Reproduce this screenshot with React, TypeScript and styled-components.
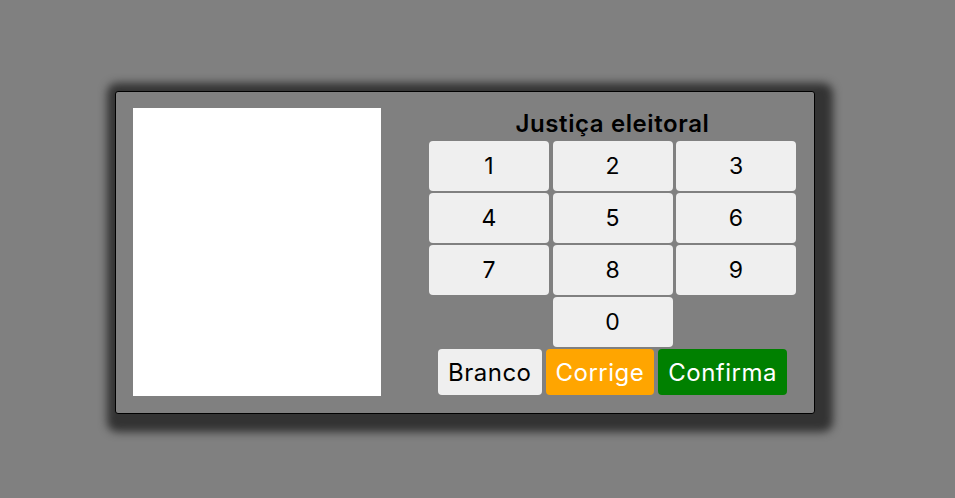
import React from "react";
import styled, { createGlobalStyle } from "styled-components";

const GlobalStyle = createGlobalStyle`
  html, body {
    margin: 0;
    padding: 0;
    background: #808080;
    font-family: "Inter", "Noto Sans", sans-serif;
  }
`;

const Page = styled.div`
  width: 955px;
  height: 498px;
  box-sizing: border-box;
  padding: 91px 0 0 115px;
`;

const Urna = styled.div`
  width: 700px;
  height: 323px;
  box-sizing: border-box;
  border: 1px solid #000;
  border-radius: 3px;
  background: #808080;
  box-shadow: 5px 5px 8px 13px #333;
  display: flex;
  padding: 16px 16px 16px 17px;
`;

const Tela = styled.div`
  width: 248px;
  height: 288px;
  background: #fff;
`;

const Lateral = styled.div`
  margin-left: 48px;
  width: 367px;
  display: flex;
  flex-direction: column;
  align-items: center;
`;

const Titulo = styled.div`
  font-size: 24px;
  font-weight: 600;
  line-height: 30px;
  height: 33px;
  padding-top: 1px;
  box-sizing: border-box;
  color: #000;
  letter-spacing: 0.6px;
`;

const Teclado = styled.div`
  display: grid;
  grid-template-columns: repeat(3, 120px);
  grid-auto-rows: 50px;
  column-gap: 3.5px;
  row-gap: 2px;
`;

const Tecla = styled.button<{ $col?: number }>`
  grid-column: ${(p) => (p.$col ? p.$col : "auto")};
  border: none;
  border-radius: 4px;
  background: #efefef;
  color: #000;
  font-family: inherit;
  font-size: 23px;
  padding: 0;
`;

const Acoes = styled.div`
  margin-top: 2px;
  display: flex;
  gap: 4px;
  justify-content: center;
`;

const Acao = styled.button<{ $bg: string; $fg: string }>`
  height: 46px;
  border: none;
  border-radius: 4px;
  background: ${(p) => p.$bg};
  color: ${(p) => p.$fg};
  font-family: inherit;
  font-size: 24px;
  letter-spacing: 0.5px;
  padding: 0 10px;
`;

export default function App() {
  const nums = ["1", "2", "3", "4", "5", "6", "7", "8", "9"];
  return (
    <Page>
      <GlobalStyle />
      <Urna>
        <Tela />
        <Lateral>
          <Titulo>Justiça eleitoral</Titulo>
          <Teclado>
            {nums.map((n) => (
              <Tecla key={n}>{n}</Tecla>
            ))}
            <Tecla $col={2}>0</Tecla>
          </Teclado>
          <Acoes>
            <Acao $bg="#efefef" $fg="#000">Branco</Acao>
            <Acao $bg="#ffa500" $fg="#fff">Corrige</Acao>
            <Acao $bg="#008000" $fg="#fff">Confirma</Acao>
          </Acoes>
        </Lateral>
      </Urna>
    </Page>
  );
}
